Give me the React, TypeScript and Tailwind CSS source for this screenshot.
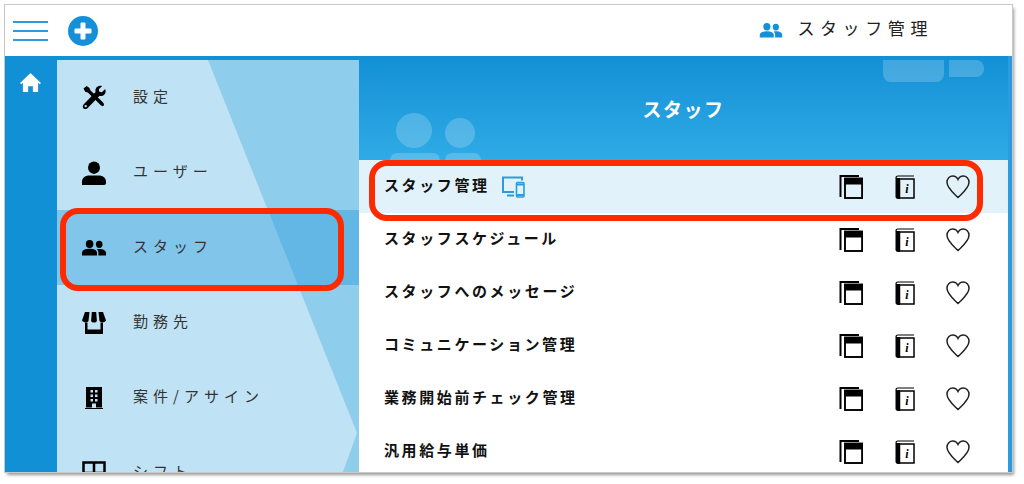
import React from "react";

const FONT = "font-['Noto_Sans_CJK_JP','Noto_Sans',sans-serif]";

function Users({ className }: { className?: string }) {
  return (
    <svg viewBox="0 0 24 16" className={className} fill="currentColor">
      <ellipse cx="7.600" cy="4" rx="3.800" ry="3.900" />
      <ellipse cx="17.200" cy="4.300" rx="3.300" ry="3.600" />
      <path d="M0 15.500v-2.600C0 10.200 3.600 8.800 7.600 8.800s7.400 1.400 7.400 4.100v2.600z" />
      <path d="M16.400 15.500v-2.800c0-1.500-.6-2.600-1.600-3.400.8-.2 1.700-.4 2.600-.4 3.500 0 6.600 1.300 6.600 3.800v2.800z" />
    </svg>
  );
}

function Tools() {
  return (
    <svg viewBox="0 0 24 25" className="h-[25px] w-6" fill="black">
      <path d="M4.600 1 1.500 3.600l1.700 3.200 2.600.7 12 11.800c1.200 1.200 2.700 2.700 3.800 1.500s-.1-2.800-1.300-4L8.300 5.300 7.500 3z" />
      <path d="M23.200 4 19.800 7.300 17.300 6.700 16.800 4.300 20.200 1c-2.800-.8-6.100.4-6.700 3.500-.2 1-.1 1.800.1 2.600L1.800 19.200C.4 20.700.4 22.400 1.500 23.400s2.800.9 4.200-.5L17.600 10.800c3.900 1.100 7.300-2.600 5.600-6.800zM3.700 22.300a1.200 1.200 0 1 1 0-2.400 1.200 1.200 0 0 1 0 2.400z" />
    </svg>
  );
}

function Person() {
  return (
    <svg viewBox="0 0 24 24" className="h-6 w-6" fill="black">
      <ellipse cx="12" cy="6.700" rx="6" ry="6.200" />
      <path d="M0 24v-3.500C0 16.500 4 14.500 7 14.500h10c3 0 7 2 7 6V22c0 1.200-.8 2-2 2z" />
    </svg>
  );
}

function Store() {
  return (
    <svg viewBox="0 0 24 22" className="h-[22px] w-6" fill="black">
      <path d="M3 0h4.500L6.500 9C5.700 11 1.500 11 0 8.500z" />
      <path d="M9.800 0h4.400l.7 9c-1 2-4.800 2-5.800 0z" />
      <path d="M16.500 0H21l3 8.500C22.500 11 18.300 11 17.500 9z" />
      <path d="M3 10.500h2.500V17.500h13v-7H21V22H3z" />
    </svg>
  );
}

function Building() {
  return (
    <svg viewBox="0 0 18 22" className="h-[22px] w-[18px]" fill="black">
      <path d="M1 0h16v20.500H11v-4H7v4H1zM5.500 3v2.500h2.500V3zm4.500 0v2.500h2.500V3zM5.500 7.500V10h2.500V7.500zm4.500 0V10h2.500V7.500zM5.500 12v2.500h2.500V12zm4.500 0v2.500h2.500V12z" />
      <rect x="0" y="21" width="18" height="1" />
    </svg>
  );
}

function Shift() {
  return (
    <svg viewBox="0 0 24 24" className="h-6 w-6" fill="none" stroke="black" strokeWidth="2.500">
      <rect x="1.500" y="1.500" width="21" height="21" />
      <path d="M12 1.500v21M1.500 12h21" />
    </svg>
  );
}

function Home() {
  return (
    <svg viewBox="0 0 22 20" className="mr-[1px] h-[19px] w-[21px]" fill="white">
      <path d="M11 0 0 10.500l1.200 1.300L3 10.200V20h5.500v-6h5v6H19v-9.800l1.800 1.600 1.200-1.300z" />
    </svg>
  );
}

function Devices() {
  return (
    <svg viewBox="0 0 24 22" className="h-[22px] w-6 text-[#2a9bdc]" fill="none" stroke="currentColor">
      <path strokeWidth="2" d="M21 4.500V1.500H2v14.500h11" />
      <path strokeWidth="2" d="M6 19.500h7" />
      <rect x="15.500" y="6.500" width="7.500" height="14.500" rx="1" strokeWidth="1.600" />
      <path strokeWidth="2" d="M15.500 8.500h7.500M15.500 19h7.500" />
    </svg>
  );
}

function Windows() {
  return (
    <svg viewBox="0 0 24 24" className="h-6 w-6" fill="none" stroke="black">
      <path strokeWidth="2" d="M20 1H1.500V22" />
      <rect x="6" y="3.500" width="17.100" height="19.500" strokeWidth="1.900" />
      <rect x="6" y="3.500" width="17.100" height="5.500" fill="black" strokeWidth="1" />
    </svg>
  );
}

function InfoBook() {
  return (
    <svg viewBox="0 0 20 24" className="h-6 w-5" fill="none" stroke="black">
      <path strokeWidth="1.200" d="M19 1H3C1.500 1 1 2 1 3" />
      <path fill="black" strokeWidth="0" d="M.5 3H5V24H3c-1.500 0-2.500-1-2.500-2.500z" />
      <rect x="4.500" y="4" width="14.500" height="19" strokeWidth="1.500" />
      <text x="11.800" y="18" fontSize="12" fontFamily="Liberation Serif" fontStyle="italic" fontWeight="700" fill="black" stroke="none" textAnchor="middle">i</text>
    </svg>
  );
}

function Heart() {
  return (
    <svg viewBox="0 0 24 24" className="h-6 w-6" fill="none" stroke="#222" strokeWidth="1.500">
      <path d="M12 22.500C7 17.500 1 13 1 7.300 1 3.500 3.700 1 6.800 1 9.200 1 11 2.400 12 4.500 13 2.400 14.800 1 17.200 1 20.300 1 23 3.500 23 7.300 23 13 17 17.500 12 22.500z" />
    </svg>
  );
}

const MENU: { label: string; icon: React.ReactNode; selected?: boolean }[] = [
  { label: "設定", icon: <Tools /> },
  { label: "ユーザー", icon: <Person /> },
  { label: "スタッフ", icon: <Users className="h-[16px] w-6 text-black" />, selected: true },
  { label: "勤務先", icon: <Store /> },
  { label: "案件/アサイン", icon: <Building /> },
  { label: "シフト", icon: <Shift /> },
];

const ROWS = ["スタッフ管理", "スタッフスケジュール", "スタッフへのメッセージ", "コミュニケーション管理", "業務開始前チェック管理", "汎用給与単価"];

export default function App() {
  return (
    <div className={`h-[484px] w-[1024px] overflow-hidden bg-white pl-[5px] pt-[5px] ${FONT}`}>
      <div className="relative h-[467px] w-[1007px] overflow-hidden bg-white shadow-[0_0_0_1px_#c8c8c8,2px_3px_3px_#999]">
        <header className="flex h-[51px] items-center">
          <div className="ml-2 flex w-[35px] flex-col gap-[7px]">
            <div className="h-[2px] bg-[#2d9cdf]" />
            <div className="h-[2px] bg-[#2d9cdf]" />
            <div className="h-[2px] bg-[#2d9cdf]" />
          </div>
          <div className="ml-5 flex h-[30px] w-[30px] items-center justify-center rounded-full bg-[#1490d8]">
            <svg viewBox="0 0 18 18" className="h-[18px] w-[18px]" fill="white">
              <path d="M6.500 1.500a1 1 0 0 1 1-1h3a1 1 0 0 1 1 1v5h5a1 1 0 0 1 1 1v3a1 1 0 0 1-1 1h-5v5a1 1 0 0 1-1 1h-3a1 1 0 0 1-1-1v-5h-5a1 1 0 0 1-1-1v-3a1 1 0 0 1 1-1h5z" />
            </svg>
          </div>
          <div className="ml-auto mr-[79px] flex items-center">
            <Users className="mr-[14px] h-[15px] w-6 text-[#1490d8]" />
            <span className="mb-[6px] text-[17px] leading-none tracking-[5.600px] text-[#222]">スタッフ管理</span>
          </div>
        </header>

        <div className="flex h-[416px] bg-[#1190d6]">
          <div className="flex w-[52px] shrink-0 justify-center pt-[17px]">
            <Home />
          </div>
          <nav className="relative mt-1 h-[412px] w-[302px] shrink-0 overflow-hidden bg-[#bfe2f4]">
            <svg className="absolute left-0 top-0 h-[412px] w-[302px]" viewBox="0 0 302 412">
              <polygon points="151,0 302,0 302,412 286,412 300,373" fill="#8fcdec" />
            </svg>
            <div className="relative flex flex-col">
              {MENU.map((m) => (
                <div key={m.label} className={`flex h-[75px] shrink-0 items-center pl-[25px] ${m.selected ? "bg-[#1190d6]/35" : ""}`}>
                  <div className="flex w-[51px] justify-start">
                    <div className="flex w-6 justify-center">{m.icon}</div>
                  </div>
                  <span className="mb-1 text-[15px] leading-none tracking-[5px] text-[#333]">{m.label}</span>
                </div>
              ))}
            </div>
          </nav>
          <main className="flex min-w-0 flex-1 flex-col overflow-hidden border-r-4 border-[#2a9bdf]">
            <div className="relative h-[104px] shrink-0 bg-gradient-to-b from-[#1190d6] to-[#2fabe6]">
              <div className="absolute left-[524px] top-1 h-[22px] w-[61px] rounded-b-lg bg-white/20" />
              <div className="absolute left-[590px] top-1 h-[17px] w-[35px] rounded-r-lg bg-white/20" />
              <div className="absolute left-[37px] top-[57px] h-[35px] w-9 rounded-[50%] bg-white/20" />
              <div className="absolute left-[86px] top-[62px] h-[30px] w-[30px] rounded-[50%] bg-white/20" />
              <div className="absolute bottom-0 left-[31px] h-[7px] w-[50px] rounded-t-full bg-white/20" />
              <div className="absolute bottom-0 left-[86px] h-[7px] w-9 rounded-t-full bg-white/20" />
              <div className="relative flex h-full items-center justify-center">
                <span className="text-[19px] font-bold leading-none tracking-[1.500px] text-white">スタッフ</span>
              </div>
            </div>
            <div className="flex flex-col bg-white">
              {ROWS.map((r, i) => (
                <div key={r} className={`flex h-[53px] shrink-0 items-center pl-[25px] ${i === 0 ? "bg-[#e2f2fa]" : ""}`}>
                  <span className="mb-1 text-[15px] font-bold leading-none tracking-[2.600px] text-[#111]">{r}</span>
                  {i === 0 && <span className="ml-[11px]"><Devices /></span>}
                  <div className="ml-auto mr-[38px] flex items-center">
                    <Windows />
                    <span className="ml-8"><InfoBook /></span>
                    <span className="ml-[31px]"><Heart /></span>
                  </div>
                </div>
              ))}
            </div>
          </main>
        </div>
      </div>
      <div className="absolute left-[60px] top-[208px] h-[83px] w-[284px] rounded-[18px] border-[6px] border-[#ff2a00]" />
      <div className="absolute left-[369px] top-[160px] h-[61px] w-[614px] rounded-[18px] border-[6px] border-[#ff2a00]" />
    </div>
  );
}
